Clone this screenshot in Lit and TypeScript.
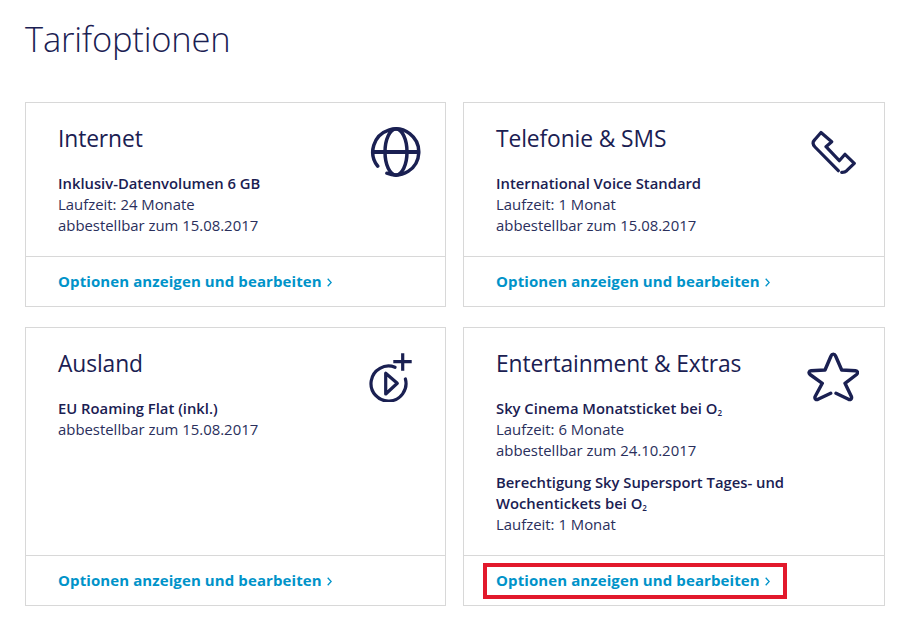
import { LitElement, html, css, svg } from "lit";
import { customElement } from "lit/decorators.js";

const o2 = html`O<span class="sub">2</span>`;

const icons = {
  globe: svg`<svg class="icon globe" width="52" height="52" viewBox="0 0 52 52" fill="none" stroke="#1a2052" stroke-width="3.500" stroke-linecap="round">
    <path d="M7.700 40.200A23 23 0 1 1 16.900 47.200"/>
    <ellipse cx="26" cy="26" rx="11" ry="23"/>
    <path d="M3 26H49" stroke-width="3.800" stroke-linecap="butt"/>
  </svg>`,
  phone: svg`<svg class="icon phone" width="46" height="46" viewBox="0 0 46 46" fill="none" stroke="#1a2052" stroke-width="3.200" stroke-linecap="round" stroke-linejoin="round">
    <path d="M28.300 40.700L5 17C2.500 14.500 2.500 12 4.500 10L11 2.500L21.700 11.700L16 16.700L29.300 30.700L35 24.300L44.300 33.300L36.700 40.700C35.500 41.800 33.500 42.400 31.700 42.300"/>
  </svg>`,
  play: svg`<svg class="icon play" width="44" height="51" viewBox="0 0 44 51" fill="none" stroke="#1a2052" stroke-width="3.200" stroke-linecap="round" stroke-linejoin="round">
    <path d="M26 16.300A17.500 17.500 0 1 0 36.400 28"/>
    <path d="M16.700 22.300V43L28.300 32.300Z"/>
    <path d="M33.700 2.300V19.700M24.300 10.700H42.700" stroke-linecap="butt"/>
  </svg>`,
  star: svg`<svg class="icon star" width="52" height="50" viewBox="0 0 52 50" fill="none" stroke="#1a2052" stroke-width="3.400" stroke-linecap="round" stroke-linejoin="round">
    <path d="M23.700 41.300L11 47.300C9 48 7.500 46.800 8 44.800L15.300 31.300L3 22.500C1.300 21 2 19 4 18.800L18 18L24 4C25 1.500 27.600 1.500 28.600 4L34.700 18L48.600 18.800C50.600 19 51.300 21 49.600 22.500L38 31.300L44.500 44.800C45 46.800 43.500 48 41.500 47.300L29 41.300"/>
  </svg>`,
};

@customElement("app-root")
export class AppRoot extends LitElement {
  static styles = css`
    :host {
      display: block;
      width: 911px;
      height: 628px;
      box-sizing: border-box;
      padding: 15px 26px 0 25px;
      background: #fff;
      color: #1a2052;
      font-family: "Open Sans", "Noto Sans", sans-serif;
      font-size: 14.9px;
      overflow: hidden;
    }
    h1 {
      margin: 0 0 39px;
      font-size: 34.5px;
      line-height: 48px;
      font-weight: 300;
      letter-spacing: -0.2px;
    }
    .grid {
      display: grid;
      grid-template-columns: 421px 422px;
      grid-template-rows: 205px 279px;
      column-gap: 17px;
      row-gap: 20px;
    }
    .card {
      border: 1px solid #d8d8d8;
      display: flex;
      flex-direction: column;
      position: relative;
      min-width: 0;
    }
    .body {
      flex: 1;
      display: flex;
      justify-content: space-between;
      align-items: flex-start;
    }
    .text {
      padding: 19px 0 0 32px;
    }
    h2 {
      margin: 0 0 17px;
      font-size: 22.8px;
      line-height: 34px;
      font-weight: 400;
      letter-spacing: -0.1px;
    }
    .item {
      margin-bottom: 11px;
      line-height: 21px;
      color: #2a2f5c;
    }
    .item b {
      display: block;
      font-size: 14.8px;
      font-weight: 600;
      color: #1a2052;
    }
    .item span.line {
      display: block;
    }
    .sub {
      font-size: 8px;
      vertical-align: -2px;
      line-height: 0;
    }
    .icon {
      flex: none;
      display: block;
    }
    .globe {
      margin: 23px 23px 0 0;
    }
    .phone {
      margin: 27px 28px 0 0;
    }
    .play {
      margin: 23px 32px 0 0;
    }
    .star {
      margin: 24px 25px 0 0;
    }
    .foot {
      height: 50px;
      flex: none;
      border-top: 1px solid #d8d8d8;
      box-sizing: border-box;
      padding: 0 0 2px 32px;
      display: flex;
      align-items: center;
      position: relative;
      color: #0093c9;
      font-weight: 700;
      font-size: 15px;
      letter-spacing: 0.1px;
    }
    .chev {
      margin: 3px 0 0 5px;
    }
    .mark {
      position: absolute;
      left: 19px;
      top: 7px;
      width: 304px;
      height: 36px;
      box-sizing: border-box;
      border: 4px solid #e2192c;
    }
  `;

  private foot(marked = false) {
    return html`<div class="foot">
      <span>Optionen anzeigen und bearbeiten</span>
      <svg class="chev" width="5" height="9" viewBox="0 0 5 9" fill="none" stroke="#0093c9" stroke-width="1.300"><path d="M0.700 0.700L4.200 4.500L0.700 8.300"/></svg>
      ${marked ? html`<div class="mark"></div>` : ""}
    </div>`;
  }

  render() {
    return html`
      <h1>Tarifoptionen</h1>
      <div class="grid">
        <section class="card">
          <div class="body">
            <div class="text">
              <h2>Internet</h2>
              <div class="item"><b>Inklusiv-Datenvolumen 6 GB</b><span class="line">Laufzeit: 24 Monate</span><span class="line">abbestellbar zum 15.08.2017</span></div>
            </div>
            ${icons.globe}
          </div>
          ${this.foot()}
        </section>
        <section class="card">
          <div class="body">
            <div class="text">
              <h2>Telefonie &amp; SMS</h2>
              <div class="item"><b>International Voice Standard</b><span class="line">Laufzeit: 1 Monat</span><span class="line">abbestellbar zum 15.08.2017</span></div>
            </div>
            ${icons.phone}
          </div>
          ${this.foot()}
        </section>
        <section class="card">
          <div class="body">
            <div class="text">
              <h2>Ausland</h2>
              <div class="item"><b>EU Roaming Flat (inkl.)</b><span class="line">abbestellbar zum 15.08.2017</span></div>
            </div>
            ${icons.play}
          </div>
          ${this.foot()}
        </section>
        <section class="card">
          <div class="body">
            <div class="text">
              <h2>Entertainment &amp; Extras</h2>
              <div class="item"><b>Sky Cinema Monatsticket bei ${o2}</b><span class="line">Laufzeit: 6 Monate</span><span class="line">abbestellbar zum 24.10.2017</span></div>
              <div class="item"><b>Berechtigung Sky Supersport Tages- und<br />Wochentickets bei ${o2}</b><span class="line">Laufzeit: 1 Monat</span></div>
            </div>
            ${icons.star}
          </div>
          ${this.foot(true)}
        </section>
      </div>
    `;
  }
}
